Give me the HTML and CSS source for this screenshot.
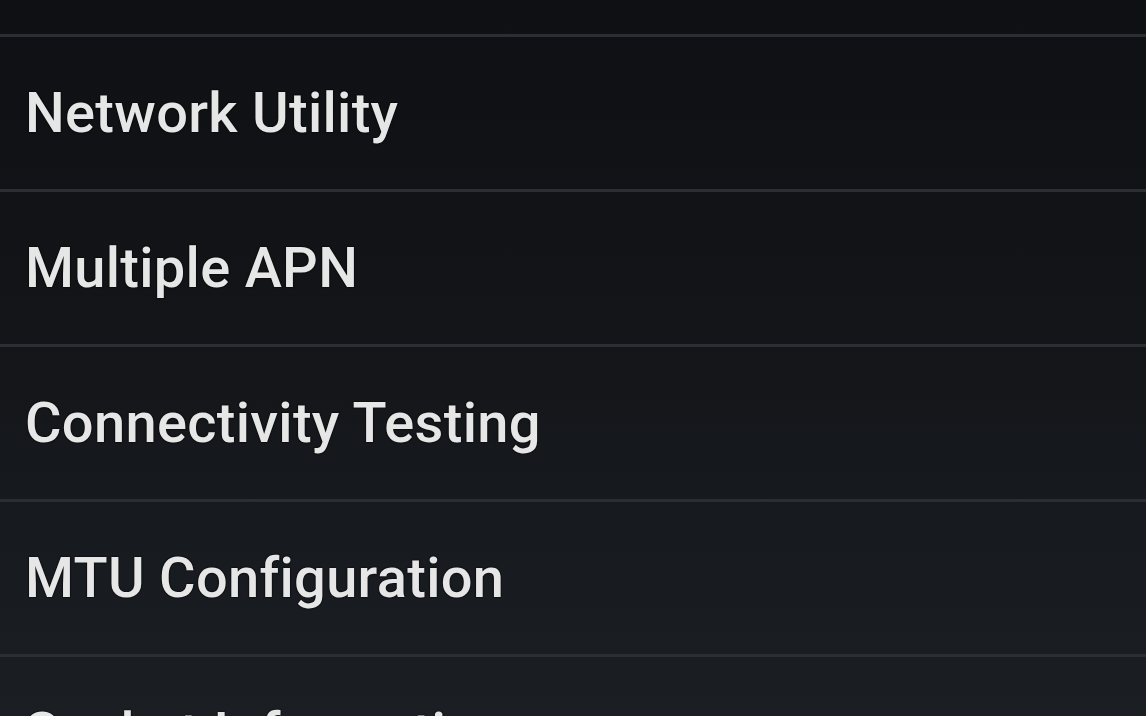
FILE: index.html
```html
<!DOCTYPE html>
<html lang="en">
<head>
<meta charset="utf-8">
<title>Settings</title>
<link rel="stylesheet" href="styles.css">
</head>
<body>
<main class="screen">
  <div class="top-gap"></div>
  <ul class="list">
    <li class="item"><span class="label">Network Utility</span></li>
    <li class="item"><span class="label">Multiple APN</span></li>
    <li class="item"><span class="label">Connectivity Testing</span></li>
    <li class="item"><span class="label">MTU Configuration</span></li>
    <li class="item"><span class="label">Socket Information</span></li>
  </ul>
</main>
</body>
</html>
```
FILE: styles.css
```css
html, body {
  margin: 0;
  padding: 0;
  height: 100%;
  overflow: hidden;
}
body {
  background: linear-gradient(180deg, #0e1013 0%, #121417 40%, #181b20 80%, #1b1e23 100%);
  font-family: Roboto, "Noto Sans", "Liberation Sans", sans-serif;
}
.screen {
  width: 1146px;
  height: 716px;
  overflow: hidden;
}
.top-gap {
  height: 34px;
}
.list {
  list-style: none;
  margin: 0;
  padding: 0;
}
.item {
  height: 152px;
  border-top: 3px solid #2b2e32;
  display: flex;
  align-items: center;
  padding-left: 25px;
}
.label {
  color: #e6e6e6;
  font-size: 56px;
  font-weight: 500;
  letter-spacing: 0.3px;
  line-height: 1;
  text-shadow: 0 0 2px #000, 0 0 1px #000;
  position: relative;
  top: 0;
}
```
